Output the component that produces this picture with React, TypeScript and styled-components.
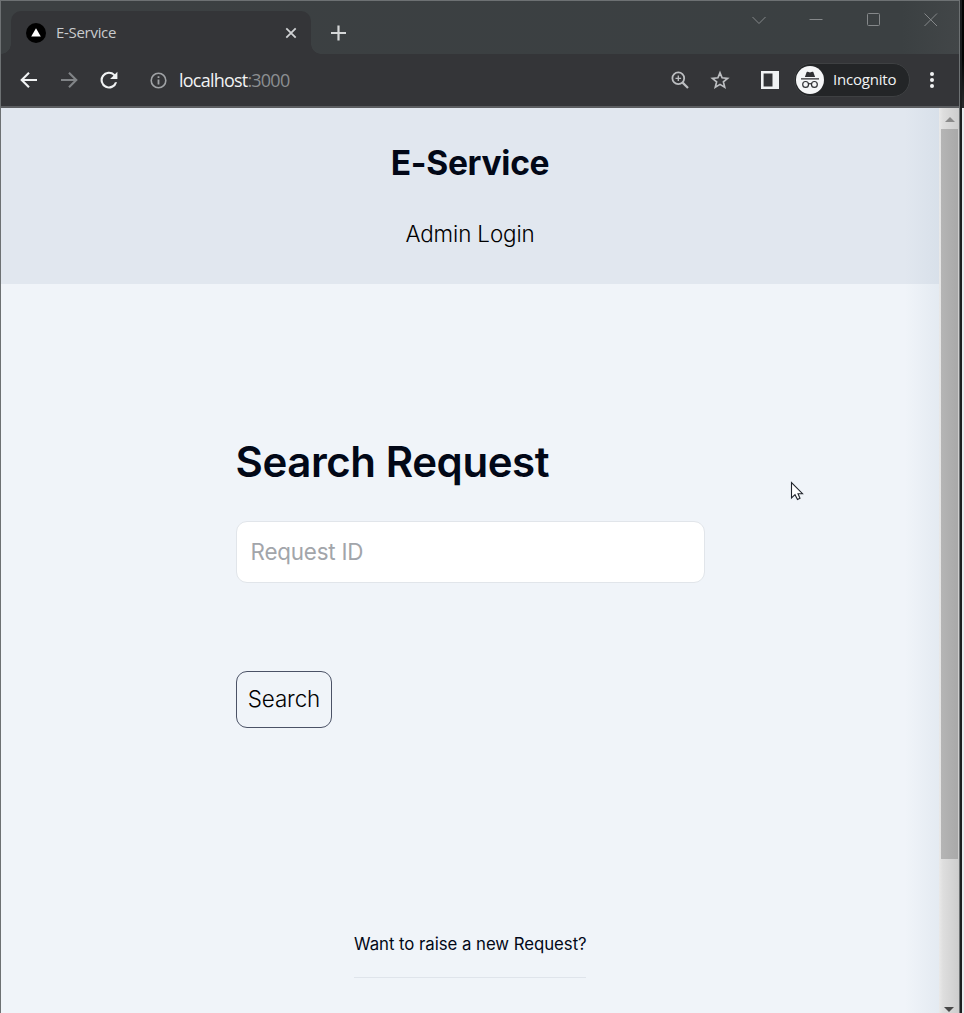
import React from "react";
import styled, { createGlobalStyle } from "styled-components";

const Global = createGlobalStyle`
  * { box-sizing: border-box; }
  html, body { margin: 0; padding: 0; overflow: hidden; }
  body { font-family: Inter, "Liberation Sans", sans-serif; background: #f0f4f9; }
`;

const Screen = styled.div`
  display: flex;
  width: 964px;
  height: 1013px;
  overflow: hidden;
`;
const Frame = styled.div`
  width: 960px;
  height: 1013px;
  flex: none;
  display: flex;
  flex-direction: column;
  border: 1px solid #6d7173;
  border-bottom: 0;
`;
const Behind = styled.div`
  width: 4px;
  display: flex;
  flex-direction: column;
  background: #e6e9ec;
  border-left: 2px solid #1c1e20;
`;
const BehindTop = styled.div`
  height: 108px;
  background: linear-gradient(#050505, #050505 55%, #2b2d2f);
`;

const TabStrip = styled.header`
  height: 53px;
  flex: none;
  display: flex;
  padding-top: 10px;
  background: linear-gradient(90deg, #3c4042, #3b4042 94%, #424648);
`;
const Tab = styled.div`
  position: relative;
  width: 300px;
  margin-left: 10px;
  height: 43px;
  display: flex;
  align-items: center;
  padding: 0 13px 0 15px;
  border-radius: 10px 10px 0 0;
  background: #343538;
  &::before, &::after {
    content: "";
    position: absolute;
    bottom: 0;
    width: 10px;
    height: 10px;
  }
  &::before { left: -10px; background: radial-gradient(circle at 0 0, transparent 9.5px, #343538 10px); }
  &::after { right: -10px; background: radial-gradient(circle at 100% 0, transparent 9.5px, #343538 10px); }
`;
const TabTitle = styled.span`
  flex: 1;
  margin-left: 10px;
  padding-bottom: 2px;
  font: 400 15px/20px "Open Sans", sans-serif;
  letter-spacing: -0.3px;
  color: #c9cbcd;
`;
const NewTab = styled.div`
  margin: 14px 0 0 20px;
  height: 16px;
`;
const WindowControls = styled.div`
  margin-left: auto;
  display: flex;
  gap: 41px;
  padding-right: 21px;
  color: #85888a;
  svg { display: block; }
`;
const Toolbar = styled.nav`
  height: 52px;
  flex: none;
  display: flex;
  align-items: center;
  padding: 0 17px 0 16px;
  background: #343538;
  svg { display: block; flex: none; }
`;
const NavIcons = styled.div`
  display: flex;
  gap: 16px;
  margin-left: -0.5px;
`;
const Address = styled.div`
  display: flex;
  align-items: center;
  flex: 1;
  margin-left: 29.5px;
  font: 400 18px/24px "Open Sans", sans-serif;
  letter-spacing: -0.78px;
  color: #f1f3f4;
`;
const Host = styled.span`
  margin-left: 12px;
`;
const Port = styled.span`
  color: #8b8e91;
`;
const Actions = styled.div`
  display: flex;
  align-items: center;
`;
const Star = styled.svg`
  margin-left: 21px;
`;
const SidePanel = styled.svg`
  margin-left: 31px;
`;
const Pill = styled.div`
  display: flex;
  align-items: center;
  width: 116px;
  height: 34px;
  margin-left: 15px;
  padding-left: 1px;
  border: 1px solid #3e4042;
  border-radius: 17px;
  background: #232527;
  color: #f1f3f4;
  font: 400 15px/20px "Open Sans", sans-serif;
  letter-spacing: -0.2px;
  svg { margin-right: 9px; }
`;
const PillText = styled.span`
  padding-bottom: 2px;
`;
const Menu = styled.svg`
  margin-left: 20px;
  margin-right: 8px;
`;
const Divider = styled.div`
  height: 2px;
  flex: none;
  background: #5c5e61;
`;

const Viewport = styled.div`
  flex: 1;
  display: flex;
  min-height: 0;
`;
const Page = styled.div`
  position: relative;
  width: 938px;
  flex: none;
  background: #f0f4f9;
  color: #020817;
  &::after {
    content: "";
    position: absolute;
    inset: 0 0 0 auto;
    width: 34px;
    background: linear-gradient(90deg, rgba(185, 200, 215, 0), rgba(185, 200, 215, 0.22));
  }
`;
const Header = styled.div`
  height: 176px;
  display: flex;
  flex-direction: column;
  align-items: center;
  padding-top: 31px;
  background: #e1e7ef;
`;
const Title = styled.h1`
  margin: 0;
  font-size: 33.6px;
  line-height: 48px;
  font-weight: 700;
  letter-spacing: -0.3px;
`;
const Login = styled.a`
  margin-top: 31px;
  font-size: 22.4px;
  line-height: 32px;
  font-weight: 300;
  letter-spacing: -0.12px;
  color: #000;
`;
const Form = styled.form`
  width: 469px;
  margin: 148px 0 0 235px;
  display: flex;
  flex-direction: column;
  align-items: flex-start;
`;
const FormTitle = styled.h2`
  margin: 0 0 0 -0.5px;
  font-size: 42px;
  line-height: 60px;
  font-weight: 600;
  letter-spacing: -0.42px;
  white-space: nowrap;
`;
const Field = styled.input`
  width: 469px;
  height: 62px;
  margin-top: 29px;
  padding: 0 13.5px 2px;
  border: 1px solid #e1e5ea;
  border-radius: 11px;
  background: #fff;
  font: 400 22.4px/32px Inter, sans-serif;
  letter-spacing: -0.2px;
  &::placeholder { color: #a2a5aa; opacity: 1; }
`;
const SearchButton = styled.button`
  width: 96px;
  height: 57px;
  margin-top: 88px;
  padding: 0 0 1px;
  border: 1px solid #4b5266;
  border-radius: 11px;
  background: transparent;
  color: #000;
  font: 300 22.4px/32px Inter, sans-serif;
  letter-spacing: -0.1px;
`;
const Raise = styled.div`
  width: 232px;
  height: 50px;
  margin: 200px 0 0 353px;
  padding-top: 4px;
  border-bottom: 1px solid #dfe4eb;
  font-size: 16.8px;
  line-height: 24px;
  letter-spacing: -0.04px;
  white-space: nowrap;
`;
const Scrollbar = styled.div`
  flex: 1;
  display: flex;
  flex-direction: column;
  align-items: center;
  padding: 0 1px;
  background: linear-gradient(90deg, #e9e9e9, #dedede 20%, #cdcdcd);
  svg { flex: none; }
`;
const Thumb = styled.div`
  width: 17px;
  height: 730px;
  margin-left: 1px;
  background: linear-gradient(90deg, #b5b5b5, #a9a9a9);
`;
const Arrow = styled.div`
  height: 21px;
  width: 18px;
  flex: none;
  display: flex;
  justify-content: center;
  align-items: center;
  padding: 2px 0 0 1px;
`;
const Track = styled.div`
  flex: 1;
`;
const Cursor = styled.svg`
  position: absolute;
  left: 790px;
  top: 481px;
`;

const s = { fill: "none", stroke: "currentColor" };

export default function App() {
  return (
    <Screen>
      <Global />
      <Frame>
        <TabStrip>
          <Tab>
            <svg width="20" height="20" viewBox="0 0 20 20"><circle cx="10" cy="10" r="10" fill="#000" /><path d="M10 5.2 14.8 13.5H5.2Z" fill="#fff" /></svg>
            <TabTitle>E-Service</TabTitle>
            <svg width="14" height="14" viewBox="0 0 14 14" {...s} stroke="#d0d2d4" strokeWidth="1.8"><path d="M2.3 2.3 11.7 11.7M11.7 2.3 2.3 11.7" /></svg>
          </Tab>
          <NewTab>
            <svg width="16" height="16" viewBox="0 0 16 16" {...s} stroke="#d5d7d8" strokeWidth="2.2"><path d="M7.5 .5V15.5M0 8H15" /></svg>
          </NewTab>
          <WindowControls>
            <svg width="16" height="18" viewBox="0 0 16 18" {...s}><path d="M1.5 6 8 12.5 14.5 6" /></svg>
            <svg width="16" height="18" viewBox="0 0 16 18" {...s}><path d="M1.5 8.5H14.5" /></svg>
            <svg width="16" height="18" viewBox="0 0 16 18" {...s}><rect x="2.5" y="2.5" width="12" height="12" rx="1" /></svg>
            <svg width="16" height="18" viewBox="0 0 16 18" {...s}><path d="M2.5 2.5 15 15M15 2.5 2.5 15" /></svg>
          </WindowControls>
        </TabStrip>
        <Toolbar>
          <NavIcons>
            <svg width="24" height="24" viewBox="0 0 24 24" {...s} stroke="#f1f3f4" strokeWidth="2.1"><path d="M20 12H5M12 4.7 4.7 12 12 19.3" /></svg>
            <svg width="24" height="24" viewBox="0 0 24 24" {...s} stroke="#818487" strokeWidth="2.1"><path d="M4 12H19M12 4.7 19.3 12 12 19.3" /></svg>
            <svg width="24" height="24" viewBox="0 0 24 24"><path fill="#f1f3f4" d="M17.65 6.35A8 8 0 1 0 19.73 14h-2.08A6 6 0 1 1 12 6c1.66 0 3.14.69 4.22 1.78L13 11h7V4z" transform="translate(-.6 -.5) scale(1.05)" /></svg>
          </NavIcons>
          <Address>
            <svg width="17" height="17" viewBox="0 0 17 17" {...s} stroke="#a0a3a6" strokeWidth="1.6"><circle cx="8.5" cy="8.5" r="7.3" /><path d="M8.5 7.5V12.5M8.5 4.3V6" strokeWidth="1.8" /></svg>
            <Host>localhost</Host><Port>:3000</Port>
          </Address>
          <Actions>
            <svg width="18" height="18" viewBox="0 0 18 18" {...s} stroke="#bcbec1" strokeWidth="1.8"><circle cx="7.3" cy="7.3" r="5.9" /><path d="M11.6 11.6 17 17" strokeWidth="2.2" /><path d="M7.3 4.5V10.1M4.5 7.3H10.1" strokeWidth="1.3" /></svg>
            <Star width="20" height="20" viewBox="0 0 20 20" {...s} stroke="#bcbec1" strokeWidth="1.7"><path d="m10 2.8 2.1 5 5.5.5-4.2 3.6 1.3 5.4L10 14.4l-4.7 2.9 1.3-5.4-4.2-3.6 5.5-.5Z" /></Star>
            <SidePanel width="18" height="18" viewBox="0 0 18 18"><path fill="#f1f3f4" fillRule="evenodd" d="M0 0H18V18H0ZM2.6 2.6V15.4H11.5V2.6Z" /></SidePanel>
            <Pill>
              <svg width="28" height="28" viewBox="0 0 28 28"><circle cx="14" cy="14" r="14" fill="#f5f6f7" /><path fill="#303134" d="M5 12.3H23V13.6H5ZM8.9 11 10.7 6.1Q11 5.5 11.8 5.8L14 6.4 16.2 5.8Q17 5.5 17.3 6.1L19.1 11Z" /><g fill="none" stroke="#303134" strokeWidth="1.2"><circle cx="9.6" cy="18.4" r="2.9" /><circle cx="18.4" cy="18.4" r="2.9" /><path d="M12.5 18Q14 17.2 15.5 18" /></g></svg>
              <PillText>Incognito</PillText>
            </Pill>
            <Menu width="4" height="18" viewBox="0 0 4 18" fill="#f1f3f4"><circle cx="2" cy="3" r="2" /><circle cx="2" cy="9" r="2" /><circle cx="2" cy="15" r="2" /></Menu>
          </Actions>
        </Toolbar>
        <Divider />
        <Viewport>
          <Page>
            <Header>
              <Title>E-Service</Title>
              <Login>Admin Login</Login>
            </Header>
            <Form>
              <FormTitle>Search Request</FormTitle>
              <Field placeholder="Request ID" />
              <SearchButton type="button">Search</SearchButton>
            </Form>
            <Raise>Want to raise a new Request?</Raise>
          </Page>
          <Scrollbar>
            <Arrow><svg width="10" height="5"><path d="M0 5 5 0 10 5Z" fill="#8b8b8b" /></svg></Arrow>
            <Thumb />
            <Track />
            <svg width="10" height="6"><path d="M0 0H10L5 5Z" fill="#484848" /></svg>
          </Scrollbar>
        </Viewport>
      </Frame>
      <Behind><BehindTop /></Behind>
      <Cursor width="14" height="20" viewBox="0 0 14 20"><path d="M1.5 1.5V17L5 13.7 7.5 18.5 10 17.3 8 12.7H12.5Z" fill="#fff" stroke="#20242c" strokeWidth="1.1" /></Cursor>
    </Screen>
  );
}
